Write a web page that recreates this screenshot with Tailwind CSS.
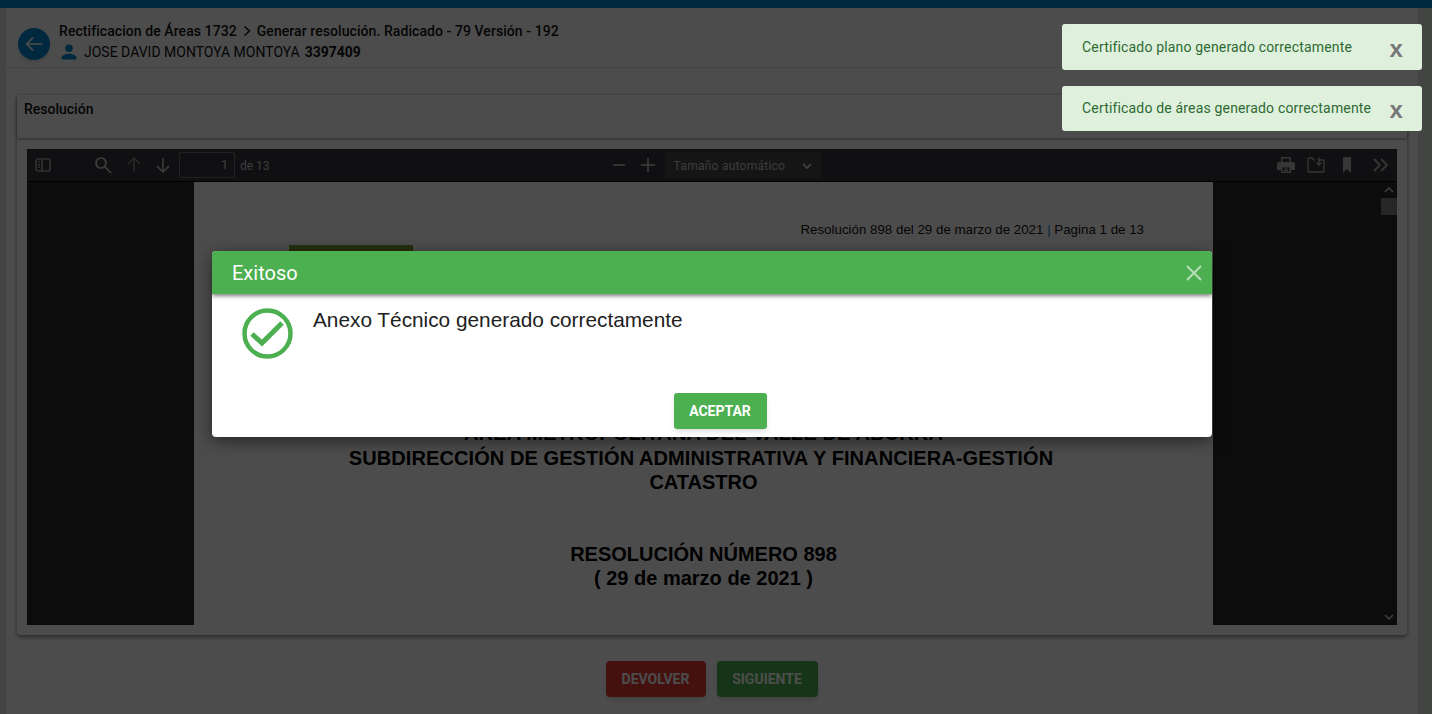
<!DOCTYPE html>
<html lang="es">
<head>
    <meta charset="UTF-8">
    <title>Generar resolución</title>
    <script src="https://cdn.jsdelivr.net/npm/@tailwindcss/browser@4"></script>
</head>
<body class="bg-[#dde6dd] font-['Roboto',sans-serif] overflow-hidden">
    <div class="relative h-[714px] w-[1432px] overflow-hidden">
        <!-- Pagina de fondo -->
        <div class="h-2 bg-[#0288d1]"></div>
        <main class="ml-[6px] h-[706px] w-[1412px] bg-white px-[11px]">
            <header class="flex h-[60px] items-center border-b border-[#e4e4e4] -mx-[11px] pl-[12px]">
                <button class="mt-[13px] mr-[9px] flex h-8 w-[32px] items-center justify-center rounded-full bg-[#0288d1] shadow-md">
                    <svg class="h-[22px] w-[22px]" viewBox="0 0 24 24" fill="none" stroke="#fff" stroke-width="1.8"><path d="M21 12H4M11 5l-7 7 7 7"/></svg>
                </button>
                <div class="text-[14px] leading-[21px] text-[#111] pt-[8px]">
                    <div class="flex items-center font-medium tracking-[0.07px]">
                        <span>Rectificacion de Áreas 1732</span>
                        <svg class="mx-[5px] h-[12px] w-[10px]" viewBox="0 0 10 12" fill="none" stroke="#111" stroke-width="1.5"><path d="M2.5 1.5 7.5 6l-5 4.500"/></svg>
                        <span>Generar resolución. Radicado - 79 Versión - 192</span>
                    </div>
                    <div class="flex items-center">
                        <svg class="mr-[5px] h-[20px] w-[20px]" viewBox="0 0 24 24" fill="#0288d1"><path d="M12 12a4.500 4.500 0 1 0 0-9 4.500 4.500 0 0 0 0 9zm0 2c-3.300 0-9 1.700-9 5v2h18v-2c0-3.300-5.700-5-9-5z"/></svg>
                        <span>JOSE DAVID MONTOYA MONTOYA</span>
                        <span class="ml-[5px] font-bold">3397409</span>
                    </div>
                </div>
            </header>

            <section class="mt-[27px] h-[540px] rounded-[3px] bg-white shadow-[0_2px_4px_rgba(0,0,0,0.45)]">
                <div class="h-[43px] pl-[7px] pt-[4px] text-[14px] font-medium text-[#111] shadow-[0_1px_3px_rgba(0,0,0,0.4)]">Resolución</div>
                <div class="mx-[10px] mt-[11px] h-[476px] bg-[#2a2a2e]">
                    <div class="flex h-[33px] items-center border-b border-[#000] bg-[#38383d] text-[#d0d0d0]">
                        <svg class="ml-[8px] h-4 w-4" viewBox="0 0 16 16" fill="none" stroke="currentColor" stroke-width="1.200"><rect x="1" y="2" width="14" height="12" rx="2"/><path d="M7 2v12M3 5h2M3 7.500h2M3 10h2"/></svg>
                        <svg class="ml-[43px] h-[18px] w-[18px]" viewBox="0 0 18 18" fill="none" stroke="currentColor" stroke-width="1.700"><circle cx="7" cy="7" r="5"/><path d="m11 11 6 6"/></svg>
                        <svg class="ml-[13px] h-[18px] w-[18px] opacity-50" viewBox="0 0 18 18" fill="none" stroke="currentColor" stroke-width="1.500"><path d="M9 16V2M3 8l6-6 6 6"/></svg>
                        <svg class="ml-[11px] h-[18px] w-[18px]" viewBox="0 0 18 18" fill="none" stroke="currentColor" stroke-width="1.500"><path d="M9 2v14M3 10l6 6 6-6"/></svg>
                        <div class="ml-[7px] h-[26px] w-[56px] rounded-[2px] border border-[#737373] pr-[6px] text-right text-[12px] leading-[24px]">1</div>
                        <span class="ml-[5px] pt-[1px] text-[12px] text-[#c8c8c8]">de 13</span>
                        <svg class="ml-[342px] h-[14px] w-[14px]" viewBox="0 0 14 14" stroke="currentColor" stroke-width="1.500"><path d="M1 7h12"/></svg>
                        <svg class="ml-[14px] h-[16px] w-[16px]" viewBox="0 0 16 16" stroke="currentColor" stroke-width="1.500"><path d="M1 8h14M8 1v14"/></svg>
                        <div class="ml-[9px] flex h-[26px] w-[156px] items-center justify-between bg-[#474749] pl-[9px] pr-[9px] pt-[1px] text-[12px] tracking-[0.25px]">
                            <span class="text-[#c8c8c8]">Tamaño automático</span>
                            <svg class="h-[8px] w-[10px]" viewBox="0 0 10 8" fill="none" stroke="currentColor" stroke-width="1.800"><path d="m1 2 4 4 4-4"/></svg>
                        </div>
                        <svg class="ml-auto h-[18px] w-[18px] text-[#b4b4b4]" viewBox="0 0 18 18" fill="currentColor"><path fill-rule="evenodd" d="M4 1h10v5h2a2 2 0 0 1 2 2v6h-4v3H4v-3H0V8a2 2 0 0 1 2-2h2zm1.500 1.500V6h7V2.500zm0 9v4h7v-4zM7 12.500h4v1H7zM7 14h4v1H7z"/></svg>
                        <svg class="ml-[12px] h-[18px] w-[18px] text-[#b4b4b4]" viewBox="0 0 18 18" fill="none" stroke="currentColor" stroke-width="1.300"><path d="M11 4h5a1 1 0 0 1 1 1v10a1 1 0 0 1-1 1H2a1 1 0 0 1-1-1V3a1 1 0 0 1 1-1h3l2 2h1M12 1v8M9.500 6.500 12 9l2.500-2.500"/></svg>
                        <svg class="ml-[17px] h-[16px] w-[10px] text-[#b4b4b4]" viewBox="0 0 10 16" fill="currentColor"><path d="M1 0h8v16l-4-4-4 4z"/></svg>
                        <svg class="ml-[20px] mr-[7px] h-[16px] w-[18px] text-[#b4b4b4]" viewBox="0 0 18 16" fill="none" stroke="currentColor" stroke-width="1.800"><path d="m2 2 6 6-6 6M9 2l6 6-6 6"/></svg>
                    </div>
                    <div class="flex h-[443px]">
                        <div class="w-[167px] bg-[#2a2a2e]"></div>
                        <div class="h-full w-[1019px] overflow-hidden bg-white pt-[40px] font-['Liberation_Sans',sans-serif] text-black">
                            <div class="pr-[69px] text-right text-[13.33px] leading-[16px] text-[#111]">Resolución 898 del 29 de marzo de 2021 <span class="text-[#0288d1]">|</span> Pagina 1 de 13</div>
                            <div class="ml-[95px] mt-[7px] h-[60px] w-[124px] bg-[#7d9e35]"></div>
                            <div class="mt-[116px] text-center text-[20px] font-bold leading-[24.500px]">
                                <p class="tracking-[0.15px]">ÁREA METROPOLITANA DEL VALLE DE ABURRA</p>
                                <p class="pr-[5px] tracking-[0.085px]">SUBDIRECCIÓN DE GESTIÓN ADMINISTRATIVA Y FINANCIERA-GESTIÓN</p>
                                <p>CATASTRO</p>
                                <p class="mt-[47px]">RESOLUCIÓN NÚMERO 898</p>
                                <p>( 29 de marzo de 2021 )</p>
                            </div>
                        </div>
                        <div class="flex-1 bg-[#2a2a2e]"></div>
                        <div class="relative w-[16px] bg-[#2a2a2e] text-[#d8d8d8]">
                            <svg class="mx-auto mt-[5px] h-[6px] w-[10px]" viewBox="0 0 10 6" fill="none" stroke="currentColor" stroke-width="1.500"><path d="m1 5 4-4 4 4"/></svg>
                            <div class="mt-[5px] h-[17px] w-[16px] bg-[#808080]"></div>
                            <svg class="absolute bottom-[5px] left-[3px] h-[6px] w-[10px]" viewBox="0 0 10 6" fill="none" stroke="currentColor" stroke-width="1.500"><path d="m1 1 4 4 4-4"/></svg>
                        </div>
                    </div>
                </div>
            </section>

            <div class="mt-[26px] flex justify-center gap-[11px] pr-[1px]">
                <button class="h-9 w-[100px] rounded-[4px] bg-[#e53935] text-[14px] font-bold text-white shadow-md">DEVOLVER</button>
                <button class="h-9 w-[101px] rounded-[4px] bg-[#4caf50] text-[14px] font-bold text-white shadow-md">SIGUIENTE</button>
            </div>
        </main>

        <!-- Fondo oscuro del modal -->
        <div class="absolute inset-0 bg-black/70"></div>

        <!-- Modal -->
        <div class="absolute left-[212px] top-[251px] h-[186px] w-[1000px] overflow-hidden rounded-[4px] bg-white shadow-[0_4px_16px_rgba(0,0,0,0.5)]">
            <div class="relative flex h-[43px] items-center justify-between bg-[#4caf50] pl-5 pr-[9px] text-[20px] text-white shadow-[0_2px_4px_rgba(0,0,0,0.5)]">
                <span>Exitoso</span>
                <svg class="h-[18px] w-[18px]" viewBox="0 0 18 18" stroke="#b7dfb9" stroke-width="2"><path d="m2 2 14 14M16 2 2 16"/></svg>
            </div>
            <div class="flex pl-[30px] pt-[14px]">
                <svg class="h-[51px] w-[51px]" viewBox="0 0 51 51" fill="none" stroke="#4caf50"><circle cx="25.500" cy="25.500" r="23" stroke-width="4.500"/><path d="m10 26 10 9 20-20" stroke-width="5"/></svg>
                <p class="ml-5 font-['Liberation_Sans',sans-serif] text-[20.8px] leading-[24px] text-[#212121]">Anexo Técnico generado correctamente</p>
            </div>
            <div class="mt-[34px] flex justify-center pl-4">
                <button class="h-9 w-[93px] rounded-[3px] bg-[#4caf50] text-[14px] font-bold text-white shadow-md">ACEPTAR</button>
            </div>
        </div>

        <!-- Notificaciones -->
        <div class="absolute right-[10px] top-[24px] flex w-[360px] flex-col gap-[16px] text-[14px] tracking-[0.17px] text-[#2e6b32]">
            <div class="flex h-[46px] justify-between rounded-[3px] bg-[#dff0dd] pl-5 pr-[19px]">
                <span class="pt-[13px]">Certificado plano generado correctamente</span>
                <span class="pt-[12px] font-['Liberation_Sans',sans-serif] text-[24px] leading-[26px] font-bold text-[#777]">x</span>
            </div>
            <div class="flex h-[45px] justify-between rounded-[3px] bg-[#dff0dd] pl-5 pr-[19px]">
                <span class="pt-[12px]">Certificado de áreas generado correctamente</span>
                <span class="pt-[11px] font-['Liberation_Sans',sans-serif] text-[24px] leading-[26px] font-bold text-[#777]">x</span>
            </div>
        </div>
    </div>
</body>
</html>
